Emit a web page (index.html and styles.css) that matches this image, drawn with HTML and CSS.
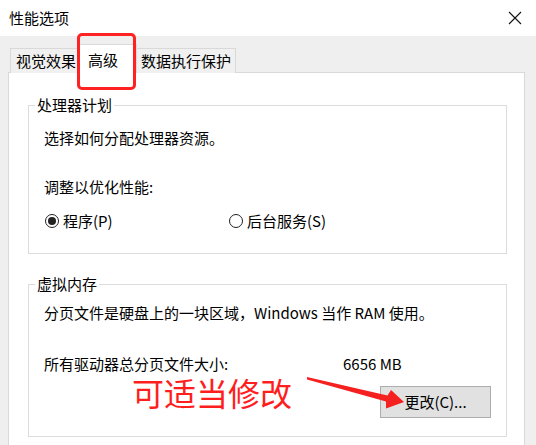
FILE: index.html
```html
<!DOCTYPE html>
<html lang="zh-CN">
<head>
<meta charset="utf-8">
<title>性能选项</title>
<link rel="stylesheet" href="styles.css">
</head>
<body>
<div class="window">
  <div class="titlebar">
    <span class="title">性能选项</span>
    <svg class="close" width="14" height="14" viewBox="0 0 14 14"><path d="M1 1 L13 13 M13 1 L1 13" stroke="#111" stroke-width="1.1" fill="none"/></svg>
  </div>
  <div class="client">
    <div class="tabs">
      <div class="tab t1">视觉效果</div>
      <div class="tab t2 active">高级</div>
      <div class="tab t3">数据执行保护</div>
    </div>
    <div class="panel">
      <fieldset class="group g1">
        <legend>处理器计划</legend>
        <div class="gbody b1">
          <p class="line l1">选择如何分配处理器资源。</p>
          <p class="line l2">调整以优化性能:</p>
          <div class="radios">
            <label class="radio"><span class="dot checked"></span>程序(P)</label>
            <label class="radio"><span class="dot"></span>后台服务(S)</label>
          </div>
        </div>
      </fieldset>
      <fieldset class="group g2">
        <legend>虚拟内存</legend>
        <div class="gbody b2">
          <p class="line m1">分页文件是硬盘上的一块区域，Windows 当作 RAM 使用。</p>
          <div class="sizerow"><span>所有驱动器总分页文件大小:</span><span>6656 MB</span></div>
          <div class="btnrow"><button class="btn">更改(C)...</button></div>
        </div>
      </fieldset>
    </div>
  </div>
  <div class="annot-box"></div>
  <div class="annot-text">可适当修改</div>
  <svg class="annot-arrow" width="536" height="445" viewBox="0 0 536 445">
    <polygon points="307,377 387.5,395.5 391,390 404,402 386,408.5 386,401.5 307,379.5" fill="#f52020"/>
  </svg>
</div>
</body>
</html>
```

FILE: styles.css
```css
* { box-sizing: border-box; }
html, body { margin: 0; padding: 0; }
body {
  width: 536px;
  height: 445px;
  overflow: hidden;
  font-family: "Noto Sans CJK SC", "Microsoft YaHei", sans-serif;
  font-size: 15px;
  color: #000;
  background: #f0f0f0;
}
.window {
  position: relative;
  width: 536px;
  height: 445px;
  overflow: hidden;
}
.titlebar {
  height: 36px;
  background: #fff;
  display: flex;
  align-items: center;
  justify-content: space-between;
  padding: 0 14px 0 9px;
  line-height: 20px;
}
.title { font-size: 15px; }
.close { display: block; }
.client {
  background: #f0efef;
  padding: 8px 11px 0 8px;
  height: 409px;
}
.tabs {
  display: flex;
  align-items: flex-end;
  height: 29px;
  margin-left: 2px;
  line-height: 20px;
}
.tab {
  height: 25px;
  border: 1px solid #d9d9d9;
  border-bottom: none;
  background: #f0f0f0;
  padding-top: 2px;
  white-space: nowrap;
}
.t1 { width: 69px; padding-left: 5px; }
.t2 { width: 58px; padding-left: 8px; }
.t3 { width: 99px; padding-left: 4px; border-left: none; }
.tab.active {
  height: 29px;
  background: #fff;
  padding-top: 5px;
  position: relative;
  z-index: 2;
}
.panel {
  margin-top: -1px;
  border: 1px solid #d9d9d9;
  background: #fff;
  padding: 22px 17px 0 19px;
  height: 400px;
}
.group {
  margin: 0;
  padding: 0;
  min-width: 0;
  border: 1px solid #dcdcdc;
}
.group legend {
  margin-left: 6px;
  padding: 0 2px;
  line-height: 20px;
  font-size: 15px;
}
.gbody { padding: 0 15px; }
.b1 { padding-top: 13px; padding-bottom: 22px; }
.b2 { padding-top: 9px; padding-bottom: 18px; }
.g2 { margin-top: 20px; }
.line { margin: 0; line-height: 20px; white-space: nowrap; }
.l2 { margin-top: 29px; }
.radios {
  margin-top: 14px;
  display: grid;
  grid-template-columns: 184px auto;
  line-height: 20px;
  padding-left: 1px;
}
.radio { display: flex; align-items: center; }
.dot {
  width: 14px;
  height: 14px;
  border: 1px solid #222;
  border-radius: 50%;
  margin-right: 4px;
  display: flex;
  align-items: center;
  justify-content: center;
}
.dot.checked::after {
  content: "";
  width: 8px;
  height: 8px;
  border-radius: 50%;
  background: #222;
}
.sizerow {
  margin-top: 31px;
  display: grid;
  grid-template-columns: 299px auto;
  line-height: 20px;
}
.btnrow {
  margin-top: 12px;
  display: flex;
  justify-content: flex-end;
}
.btn {
  width: 111px;
  height: 32px;
  background: #e1e1e1;
  border: 1px solid #adadad;
  border-radius: 0;
  font-family: inherit;
  font-size: 15px;
  color: #000;
  padding: 0;
  line-height: 20px;
}
.annot-box {
  position: absolute;
  left: 77px;
  top: 33px;
  width: 59px;
  height: 57px;
  border: 3px solid #ff2222;
  border-radius: 5px;
  z-index: 5;
}
.annot-text {
  position: absolute;
  left: 132px;
  top: 378px;
  font-size: 32px;
  line-height: 28px;
  color: #ff1e1e;
  white-space: nowrap;
  z-index: 5;
}
.annot-arrow {
  position: absolute;
  left: 0;
  top: 0;
  z-index: 6;
  pointer-events: none;
}
```
